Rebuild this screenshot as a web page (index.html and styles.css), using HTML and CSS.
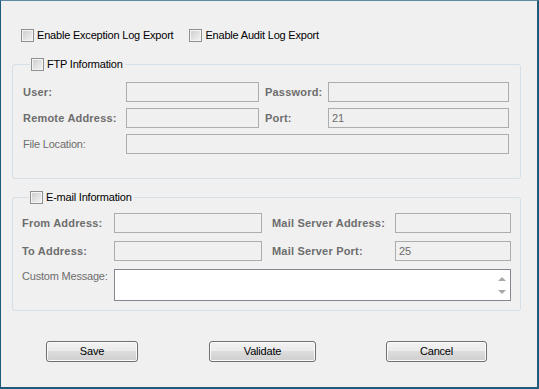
FILE: index.html
```html
<!DOCTYPE html>
<html lang="en">
  <head>
    <meta charset="UTF-8" />
    <title>Log Export Settings</title>
    <link rel="stylesheet" href="styles.css">
  </head>
  <body>
    <div class="window">
      <div class="exports">
        <label class="check"><span class="box"></span>Enable Exception Log Export</label>
        <label class="check"><span class="box"></span>Enable Audit Log Export</label>
      </div>

      <fieldset class="group ftp">
        <legend><label class="check"><span class="box"></span>FTP Information</label></legend>
        <div class="grid ftp_grid">
          <div class="lbl bold">User:</div>
          <div class="field"></div>
          <div class="lbl bold second">Password:</div>
          <div class="field"></div>

          <div class="lbl bold">Remote Address:</div>
          <div class="field"></div>
          <div class="lbl bold second">Port:</div>
          <div class="field">21</div>

          <div class="lbl">File Location:</div>
          <div class="field wide"></div>
        </div>
      </fieldset>

      <fieldset class="group mail">
        <legend><label class="check"><span class="box"></span>E-mail Information</label></legend>
        <div class="grid mail_grid">
          <div class="lbl bold">From Address:</div>
          <div class="field"></div>
          <div class="lbl bold second">Mail Server Address:</div>
          <div class="field"></div>

          <div class="lbl bold">To Address:</div>
          <div class="field"></div>
          <div class="lbl bold second">Mail Server Port:</div>
          <div class="field">25</div>

          <div class="lbl top">Custom Message:</div>
          <div class="memo wide">
            <div class="memo_text"></div>
            <div class="memo_bar">
              <i class="up"></i>
              <i class="down"></i>
            </div>
          </div>
        </div>
      </fieldset>

      <div class="buttons">
        <div class="btn save">Save</div>
        <div class="btn validate">Validate</div>
        <div class="btn cancel">Cancel</div>
      </div>
    </div>
  </body>
</html>
```

FILE: styles.css
```css
* {
  margin: 0;
  padding: 0;
  box-sizing: border-box;
}
body {
  font-family: "Liberation Sans", Arial, sans-serif;
  font-size: 11px;
  letter-spacing: -0.2px;
  color: #000;
  background: #f0f0f0;
}
.window {
  width: 539px;
  height: 389px;
  background-color: #f0f0f0;
  border-top: 1px solid #5f8aa6;
  border-left: 1px solid #1e5b7d;
  border-right: 2px solid #1e5b7d;
  border-bottom: 2px solid #1e5b7d;
}

.exports {
  display: flex;
  height: 13px;
  margin-top: 28px;
  padding-left: 20px;
}
.exports .check + .check {
  margin-left: 16px;
}

.check {
  display: flex;
  align-items: center;
  height: 13px;
  line-height: 13px;
  white-space: nowrap;
}
.box {
  width: 13px;
  height: 13px;
  margin-right: 3px;
  border: 1px solid #8e8f8f;
  box-shadow: inset 0 0 0 1px #f4f4f4;
  background: linear-gradient(135deg, #cbcbcb, #f6f6f6);
}

.group {
  width: 509px;
  margin-left: 11px;
  border: 1px solid #d5dfe5;
  border-radius: 3px;
}
.group legend {
  margin-left: 7px;
  padding: 0 2px 0 1px;
}
.ftp {
  margin-top: 16px;
  padding: 11px 0 24px 10px;
}
.mail {
  margin-top: 12px;
  padding: 9px 0 9px 9px;
}

.grid {
  display: grid;
  align-items: center;
}
.ftp_grid {
  grid-template-columns: 103px 133px 69px 181px;
  grid-auto-rows: 20px;
  row-gap: 6px;
}
.mail_grid {
  grid-template-columns: 92px 148px 133px 116px;
  grid-template-rows: 20px 20px 32px;
  row-gap: 8px;
}

.lbl {
  color: #6d6d6d;
  white-space: nowrap;
}
.bold {
  font-weight: bold;
  letter-spacing: 0.2px;
}
.ftp_grid .second {
  padding-left: 6px;
}
.mail_grid .second {
  padding-left: 10px;
}
.top {
  align-self: start;
  padding-top: 1px;
}

.field {
  height: 20px;
  line-height: 18px;
  padding-left: 3px;
  color: #6d6d6d;
  background-color: #f0f0f0;
  border: 1px solid #adadad;
}
.wide {
  grid-column: 2 / 5;
}

.memo {
  display: flex;
  height: 32px;
  background-color: #fff;
  border: 1px solid #828790;
}
.memo_text {
  flex: 1;
}
.memo_bar {
  width: 16px;
  display: flex;
  flex-direction: column;
  justify-content: space-between;
  align-items: center;
  padding: 7px 0 6px;
}
.memo_bar i {
  width: 0;
  height: 0;
  border-left: 4px solid transparent;
  border-right: 4px solid transparent;
}
.memo_bar .up {
  border-bottom: 4px solid #a8a8a8;
}
.memo_bar .down {
  border-top: 4px solid #a8a8a8;
}

.buttons {
  display: flex;
  margin-top: 30px;
  padding-left: 45px;
}
.btn {
  height: 21px;
  line-height: 19px;
  text-align: center;
  border: 1px solid #707070;
  border-radius: 3px;
  box-shadow: inset 0 0 0 1px #fbfbfb;
  background: linear-gradient(#f2f2f2 0%, #ebebeb 45%, #dddddd 50%, #cfcfcf 100%);
}
.save {
  width: 92px;
}
.validate {
  width: 107px;
  margin-left: 71px;
}
.cancel {
  width: 101px;
  margin-left: 70px;
}
```
